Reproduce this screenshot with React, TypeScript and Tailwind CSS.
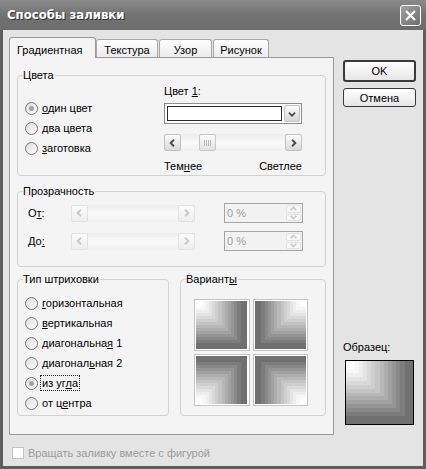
import React from 'react'

const FONT = "font-['Liberation_Sans',Arial,sans-serif]"

function Chevron({ dir, color }: { dir: 'left' | 'right' | 'up' | 'down'; color: string }) {
  const d = {
    left: 'M9.5 4.5 L6 8 L9.5 11.5',
    right: 'M6.5 4.5 L10 8 L6.5 11.5',
    up: 'M4.5 9.5 L8 6 L11.5 9.5',
    down: 'M4.5 6.5 L8 10 L11.5 6.5',
  }[dir]
  return (
    <svg width="16" height="16" viewBox="0 0 16 16" className="block">
      <path d={d} fill="none" stroke={color} strokeWidth="2" />
    </svg>
  )
}

function ScrollBar({ className, disabled, thumb }: { className: string; disabled?: boolean; thumb?: boolean }) {
  const btn = disabled
    ? 'border-[#e2e2e2] bg-linear-to-b from-[#fbfbfb] to-[#eeeeee]'
    : 'border-[#c2c2c2] bg-linear-to-b from-[#fdfdfd] to-[#dadada]'
  const arrow = disabled ? '#c8c8c8' : '#4a4a4a'
  return (
    <div className={`flex h-[17px] bg-linear-to-b from-[#ececec] via-[#fafafa] to-[#f0f0f0] ${className}`}>
      <div className={`flex h-[17px] w-[17px] items-center justify-center rounded-[2px] border ${btn}`}>
        <Chevron dir="left" color={arrow} />
      </div>
      <div className="flex-1">
        {thumb && (
          <div className="ml-[18px] flex h-[17px] w-[17px] items-center justify-center rounded-[2px] border border-[#c8c8c8] bg-linear-to-b from-[#fdfdfd] to-[#e2e2e2]">
            <div className="flex gap-[1px]">
              <span className="h-[6px] w-[1px] bg-[#b8b8b8]" />
              <span className="h-[6px] w-[1px] bg-[#b8b8b8]" />
              <span className="h-[6px] w-[1px] bg-[#b8b8b8]" />
              <span className="h-[6px] w-[1px] bg-[#b8b8b8]" />
            </div>
          </div>
        )}
      </div>
      <div className={`flex h-[17px] w-[17px] items-center justify-center rounded-[2px] border ${btn}`}>
        <Chevron dir="right" color={arrow} />
      </div>
    </div>
  )
}

function Spin() {
  return (
    <div className="flex h-[20px] w-[79px] border border-[#a6a6a6] bg-[#f2f2f2]">
      <div className="flex-1 pl-[2px] leading-[18px] text-[#a0a0a0]">0 %</div>
      <div className="m-[1px] flex w-[15px] flex-col gap-[1px]">
        <div className="flex h-[8px] items-center justify-center overflow-hidden rounded-[2px] border border-[#e2e2e2] bg-[#f8f8f8]">
          <Chevron dir="up" color="#c8c8c8" />
        </div>
        <div className="flex h-[8px] items-center justify-center overflow-hidden rounded-[2px] border border-[#e2e2e2] bg-[#f8f8f8]">
          <Chevron dir="down" color="#c8c8c8" />
        </div>
      </div>
    </div>
  )
}

function Radio({ checked, children, focus }: { checked?: boolean; children: React.ReactNode; focus?: boolean }) {
  return (
    <div className="flex h-[20px] items-center">
      <span className="flex h-[13px] w-[13px] items-center justify-center rounded-full border border-[#767676] bg-linear-to-br from-[#dcdcdc] to-[#ffffff]">
        {checked && <span className="h-[5px] w-[5px] rounded-full bg-[#a0a0a0]" />}
      </span>
      <span className={`ml-[3px] px-[1px] leading-[14px] ${focus ? 'outline outline-1 outline-dotted outline-[#222]' : ''}`}>
        {children}
      </span>
    </div>
  )
}

function Group({ title, className, children }: { title: React.ReactNode; className: string; children?: React.ReactNode }) {
  return (
    <div className={`relative rounded-[4px] border border-[#d2d2d2] ${className}`}>
      <span className="absolute -top-[8px] left-[5px] bg-[#f4f4f4] pr-[1px] leading-[14px]">{title}</span>
      {children}
    </div>
  )
}

function CornerGradient({ w, h, corner }: { w: number; h: number; corner: 'tl' | 'tr' | 'bl' | 'br' }) {
  const n = 16
  const rects: React.ReactNode[] = []
  for (let i = n; i >= 1; i--) {
    const rw = (w * i) / n
    const rh = (h * i) / n
    const t = Math.pow(Math.min(1, Math.max(0, (i - 2) / (n - 3))), 1.15)
    const c = Math.round(254 - t * (254 - 112))
    const x = corner === 'tl' || corner === 'bl' ? 0 : w - rw
    const y = corner === 'tl' || corner === 'tr' ? 0 : h - rh
    rects.push(<rect key={i} x={x} y={y} width={rw} height={rh} fill={`rgb(${c},${c},${c})`} />)
  }
  return (
    <svg width={w} height={h} className="block" shapeRendering="crispEdges">
      {rects}
    </svg>
  )
}

function Cell({ corner }: { corner: 'tl' | 'tr' | 'bl' | 'br' }) {
  return (
    <div className="border border-[#c4c4c4] bg-white p-[1px]">
      <CornerGradient w={51} h={48} corner={corner} />
    </div>
  )
}

export default function App() {
  return (
    <div className={`${FONT} h-[469px] w-[426px] bg-[#5e5e5e] text-[11px] text-black`}>
      {/* title bar */}
      <div className="flex h-[30px] items-center justify-between bg-linear-to-b from-[#8a8a8a] via-[#727272] to-[#6c6c6c] pl-[7px] pr-[5px]">
        <span className="font-['DejaVu_Sans_Condensed','DejaVu_Sans',sans-serif] text-[13px] font-bold text-white [font-stretch:condensed] [text-shadow:1px_1px_0_#333]">
          Способы заливки
        </span>
        <div className="flex h-[21px] w-[21px] items-center justify-center rounded-[3px] border border-white bg-linear-to-br from-[#a0a0a0] to-[#707070]">
          <svg width="13" height="13" viewBox="0 0 13 13">
            <path d="M2 2 L11 11 M11 2 L2 11" stroke="white" strokeWidth="2.2" />
          </svg>
        </div>
      </div>

      {/* client */}
      <div className="mx-[3px] flex h-[436px] flex-col bg-[#e4e4e4]">
        <div className="flex pl-[6px] pt-[7px]">
          <div className="w-[325px]">
            {/* tabs */}
            <div className="flex h-[20px] items-end">
              <div className="relative z-10 -mb-[1px] h-[21px] w-[87px] rounded-t-[3px] border border-b-0 border-[#9a9a9a] bg-[#f4f4f4] pl-[7px] pt-[5px] leading-[14px]">
                Градиентная
              </div>
              <div className="h-[18px] w-[62px] rounded-t-[3px] border border-b-0 border-[#a8a8a8] bg-linear-to-b from-[#ffffff] to-[#ececec] pt-[3px] text-center leading-[14px]">
                Текстура
              </div>
              <div className="ml-[1px] h-[18px] w-[53px] rounded-t-[3px] border border-b-0 border-[#a8a8a8] bg-linear-to-b from-[#ffffff] to-[#ececec] pt-[3px] text-center leading-[14px]">
                Узор
              </div>
              <div className="ml-[1px] h-[18px] w-[56px] rounded-t-[3px] border border-b-0 border-[#a8a8a8] bg-linear-to-b from-[#ffffff] to-[#ececec] pt-[3px] text-center leading-[14px]">
                Рисунок
              </div>
            </div>
            {/* panel */}
            <div className="h-[378px] border border-[#9a9a9a] bg-[#f4f4f4] px-[7px] pt-[17px]">
              <Group title="Цвета" className="flex h-[101px]">
                <div className="w-[146px] pl-[7px] pt-[22px]">
                  <Radio checked>
                    <u>о</u>дин цвет
                  </Radio>
                  <Radio>
                    <u>д</u>ва цвета
                  </Radio>
                  <Radio>
                    <u>з</u>аготовка
                  </Radio>
                </div>
                <div className="w-[138px] pt-[8px]">
                  <div className="leading-[14px]">
                    Цвет <u>1</u>:
                  </div>
                  <div className="mt-[5px] flex h-[21px] items-center border border-[#8c8c8c] bg-white p-[1px]">
                    <div className="ml-[1px] h-[15px] flex-1 border border-[#2a2a2a] bg-white" />
                    <div className="ml-[2px] flex h-[17px] w-[16px] items-center justify-center rounded-[2px] border border-[#c2c2c2] bg-linear-to-b from-[#fdfdfd] to-[#d6d6d6]">
                      <Chevron dir="down" color="#4a4a4a" />
                    </div>
                  </div>
                  <ScrollBar className="mt-[10px] w-[138px]" thumb />
                  <div className="mt-[8px] flex justify-between leading-[14px]">
                    <span>
                      Тем<u>н</u>ее
                    </span>
                    <span>Светлее</span>
                  </div>
                </div>
              </Group>

              <Group title="Прозрачность" className="mt-[15px] h-[76px] pl-[10px] pt-[11px]">
                <div className="flex h-[20px] items-center">
                  <span className="w-[43px] leading-[14px] text-black">
                    О<u>т</u>:
                  </span>
                  <ScrollBar className="w-[124px]" disabled />
                  <div className="ml-[29px]">
                    <Spin />
                  </div>
                </div>
                <div className="mt-[8px] flex h-[20px] items-center">
                  <span className="w-[43px] leading-[14px] text-black">
                    До<u>:</u>
                  </span>
                  <ScrollBar className="w-[124px]" disabled />
                  <div className="ml-[29px]">
                    <Spin />
                  </div>
                </div>
              </Group>

              <div className="mt-[12px] flex gap-[11px]">
                <Group title="Тип штриховки" className="h-[137px] w-[152px] pl-[7px] pt-[13px]">
                  <Radio>
                    <u>г</u>оризонтальная
                  </Radio>
                  <Radio>
                    <u>в</u>ертикальная
                  </Radio>
                  <Radio>
                    диагональна<u>я</u> 1
                  </Radio>
                  <Radio>
                    диагонал<u>ь</u>ная 2
                  </Radio>
                  <Radio checked focus>
                    из уг<u>л</u>а
                  </Radio>
                  <Radio>
                    от ц<u>е</u>нтра
                  </Radio>
                </Group>
                <Group
                  title={
                    <>
                      Вариант<u>ы</u>
                    </>
                  }
                  className="h-[137px] flex-1 pl-[13px] pt-[19px]"
                >
                  <div className="grid w-[114px] grid-cols-2 gap-[3px]">
                    <Cell corner="tl" />
                    <Cell corner="tr" />
                    <Cell corner="bl" />
                    <Cell corner="br" />
                  </div>
                </Group>
              </div>
            </div>
          </div>

          {/* right column */}
          <div className="ml-[9px] flex w-[73px] flex-col">
            <div className="mt-[23px] flex h-[22px] items-center justify-center rounded-[3px] border-2 border-[#3a3a3a] bg-linear-to-b from-[#ffffff] to-[#e6e6e6] leading-[14px]">
              OK
            </div>
            <div className="mt-[6px] flex h-[19px] items-center justify-center rounded-[3px] border border-[#3a3a3a] bg-linear-to-b from-[#ffffff] to-[#e6e6e6] leading-[14px]">
              Отмена
            </div>
            <div className="mt-[233px] leading-[14px]">Образец:</div>
            <div className="ml-[2px] mt-[6px] w-[69px] border border-black">
              <CornerGradient w={67} h={63} corner="tl" />
            </div>
          </div>
        </div>

        {/* checkbox */}
        <div className="mt-[11px] flex items-center pl-[9px]">
          <span className="h-[12px] w-[12px] border border-[#c4c4c4] bg-white" />
          <span className="ml-[4px] leading-[14px] text-[#9c9c9c]">Вращать заливку вместе с фигурой</span>
        </div>
      </div>
    </div>
  )
}
